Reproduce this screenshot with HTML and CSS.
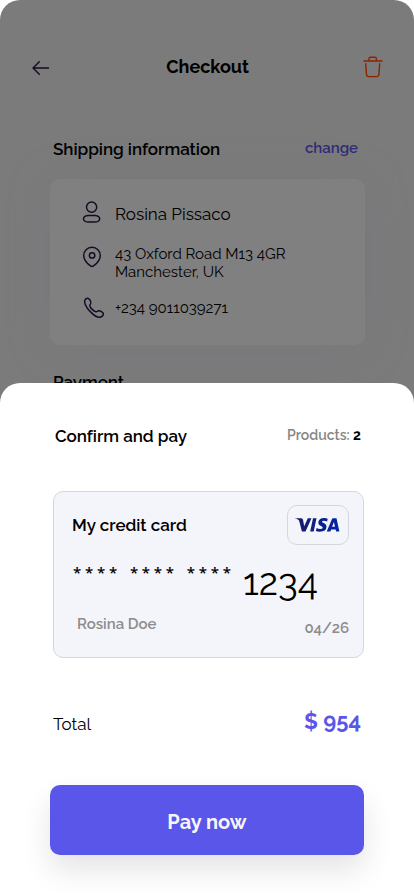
FILE: index.html
```html
<!DOCTYPE html>
<html lang="en">
<head>
<meta charset="utf-8">
<title>Checkout</title>
<link rel="stylesheet" href="styles.css">
</head>
<body>
<div class="screen">
  <main class="page">
    <header class="topbar">
      <svg class="back" width="18" height="16" viewBox="0 0 18 16"><path d="M16.5 8H1.2M7.3 1.7L1 8l6.3 6.3"/></svg>
      <h1>Checkout</h1>
      <svg class="trash" width="20" height="22" viewBox="0 0 20 22"><path d="M1 5h18M6 5V2.8Q6 1.3 7.5 1.3h4.4q1.5 0 1.5 1.5V5M2.7 7.8l.8 10.7q.2 2.1 2.2 2.1h8q2 0 2.2-2.1l.8-10.7"/></svg>
    </header>
    <div class="section-head">
      <h2 class="shipping-title">Shipping information</h2>
      <a class="change">change</a>
    </div>
    <section class="info">
      <div class="row person">
        <svg width="22" height="24" viewBox="0 0 22 24"><circle cx="9.6" cy="6.2" r="5.1"/><rect x="1.5" y="14.5" width="16.2" height="6.6" rx="5" ry="3.3"/></svg>
        <span class="name">Rosina Pissaco</span>
      </div>
      <div class="row address">
        <svg width="22" height="24" viewBox="0 0 22 24"><path d="M10 1.3c-4.7 0-8.3 3.6-8.3 8.1 0 4.1 3.2 7.8 6.5 10.3q1.8 1.4 3.6 0c3.3-2.5 6.5-6.2 6.5-10.3 0-4.5-3.6-8.1-8.3-8.1z"/><circle cx="10.1" cy="9.4" r="2.7"/></svg>
        <span>43 Oxford Road M13 4GR<br>Manchester, UK</span>
      </div>
      <div class="row phone">
        <svg width="22" height="24" viewBox="0 0 22 24"><path d="M3.5 2.3C5.3.5 6.7 1 7.9 2.9c1.6 2.6 1.3 3.2.2 4.7-.9 1.3-.3 2.4 2.1 4.8s3.6 3.1 4.9 2.1c1.4-1.1 2.1-1.3 4.7.3 1.9 1.2 2.2 2.6.5 4.3-2 2-5.3 2.2-11.3-3.7S1.5 4.4 3.5 2.3z"/></svg>
        <span class="number">+234 9011039271</span>
      </div>
    </section>
    <h2 class="payment-title">Payment</h2>
  </main>

  <section class="sheet">
    <div class="sheet-head">
      <h2>Confirm and pay</h2>
      <p class="products">Products: <b>2</b></p>
    </div>
    <div class="card">
      <div class="card-top">
        <h3>My credit card</h3>
        <div class="brand">
          <svg width="46" height="16" viewBox="0 0 46 16">
            <defs><linearGradient id="ink" x1="0" x2="1"><stop offset="0" stop-color="#181b66"/><stop offset="1" stop-color="#0026a8"/></linearGradient></defs>
            <path fill="url(#ink)" d="M.2 1.2h6.1q1.4 0 1.7 1.5l1.2 6.6 3.6-8.1h3.7L10.5 14.4H6.9L4.2 4Q3.9 2.8 2.8 2.4 1.6 1.8.1 1.5zM18 1.2h3.5l-2.8 13.2h-3.5zM32.7 1.7l-.6 2.8q-1.6-.8-3.2-.8-1.9 0-1.9 1 0 .6 1.8 1.4 2.7 1.2 2.7 3.4 0 5.2-6.8 5.2-2.3 0-3.8-.8l.7-3q1.7 1 3.6 1 2.5 0 2.5-1.2 0-.8-1.8-1.6-2.6-1.2-2.6-3.3Q23.4 1 29.4 1q1.8 0 3.3.7zM38 1.2h3.5l2.9 13.2h-3.3l-.4-2h-4.5l-.8 2h-3.7l5.2-12.1q.4-1.1 1.1-1.1zm.9 3.7l-1.8 4.9H40z"/>
          </svg>
        </div>
      </div>
      <div class="card-number">
        <span class="mask"><span>****</span><span>****</span><span>****</span></span>
        <span class="last">1234</span>
      </div>
      <div class="card-bottom">
        <span class="holder">Rosina Doe</span>
        <span class="expiry">04/26</span>
      </div>
    </div>
    <div class="total">
      <span class="total-label">Total</span>
      <span class="amount">$ 954</span>
    </div>
    <button class="pay">Pay now</button>
  </section>
</div>
</body>
</html>
```
FILE: styles.css
```css
* { box-sizing: border-box; }
body { margin: 0; background: #fff; }
h1, h2, h3, p { margin: 0; }
svg { display: block; flex: none; }

.screen {
  position: relative;
  width: 414px;
  height: 896px;
  overflow: hidden;
  font-family: Raleway, Lato, sans-serif;
  color: #000;
  background: #7b7b7b;
  border-radius: 20px 20px 0 0;
}

.topbar {
  display: flex;
  justify-content: space-between;
  align-items: center;
  height: 24px;
  margin: 55px 31px 0 32px;
}
.topbar svg { fill: none; stroke-width: 1.4; stroke-linecap: round; stroke-linejoin: round; }
.back { stroke: #160b24; margin-top: 2px; }
.trash { stroke: #8b2500; }
h1 { font-size: 18px; line-height: 24px; font-weight: 700; margin-left: 2px; }
h2, h3 { font-size: 17px; line-height: 24px; font-weight: 600; letter-spacing: -.03px; }

.section-head {
  display: flex;
  justify-content: space-between;
  margin: 58px 56px 0 53px;
}
.change { font-size: 15px; line-height: 22px; font-weight: 600; color: #2f2b77; }

.info {
  width: 315px;
  height: 166px;
  margin: 18px 0 0 50px;
  padding: 22px 20px 0 32px;
  border-radius: 10px;
  background: #808080;
  box-shadow: 0 4px 40px rgba(117, 119, 130, .4);
}
.row { display: flex; gap: 11px; font-size: 15px; line-height: 18px; }
.row svg { fill: none; stroke: #160b24; stroke-width: 1.5; }
.row > span { white-space: nowrap; }
.name { padding-top: 2px; font-size: 17px; line-height: 22px; }
.address { margin-top: 21px; }
.address span { margin-top: -1px; }
.phone { margin-top: 16px; }
.number { padding-top: 2px; }
.payment-title { margin: 25px 0 0 53px; }

.sheet {
  position: absolute;
  left: 0;
  right: 0;
  bottom: 0;
  height: 513px;
  padding-top: 41px;
  background: #fff;
  border-radius: 20px 20px 0 0;
}
.sheet-head { display: flex; justify-content: space-between; margin: 0 53px 0 55px; }
.products { font-size: 14px; line-height: 23px; font-weight: 600; color: #868686; }
.products b { font-weight: 700; color: #000; }

.card {
  width: 311px;
  height: 167px;
  margin: 43px 0 0 53px;
  padding: 13px 14px 0 18px;
  border: 1px solid #d5d6df;
  border-radius: 10px;
  background: #f4f5fa;
}
.card-top { display: flex; justify-content: space-between; }
h3 { margin-top: 8px; }
.brand {
  display: flex;
  align-items: center;
  justify-content: center;
  width: 62px;
  height: 40px;
  border: 1px solid #d5d6df;
  border-radius: 10px;
}
.card-number { display: flex; height: 58px; }
.mask { display: flex; gap: 9px; padding: 15px 0 0 1px; width: 171px; font: 600 15px/24px "Open Sans", sans-serif; letter-spacing: 3.75px; }
.last { font-size: 37px; line-height: 74px; }
.card-bottom { display: flex; justify-content: space-between; padding-left: 5px; font-size: 15px; line-height: 24px; font-weight: 600; color: #8c8c8c; }
.holder { margin-top: 9px; }
.expiry { margin-top: 13px; }

.total { display: flex; justify-content: space-between; align-items: center; height: 30px; margin: 49px 53px 0; }
.total-label { font-size: 17px; padding-top: 3px; }
.amount { font-size: 22px; line-height: 26px; font-weight: 700; margin-top: -2px; color: #5956e9; }

.pay {
  display: block;
  width: 314px;
  height: 70px;
  margin: 48px 0 0 50px;
  border: 0;
  border-radius: 10px;
  background: #5956e9;
  color: #f6f6f9;
  font: 700 20px Raleway, Lato, sans-serif;
  padding-top: 4px;
  box-shadow: 0 15px 30px rgba(0, 0, 0, .11);
}
```
